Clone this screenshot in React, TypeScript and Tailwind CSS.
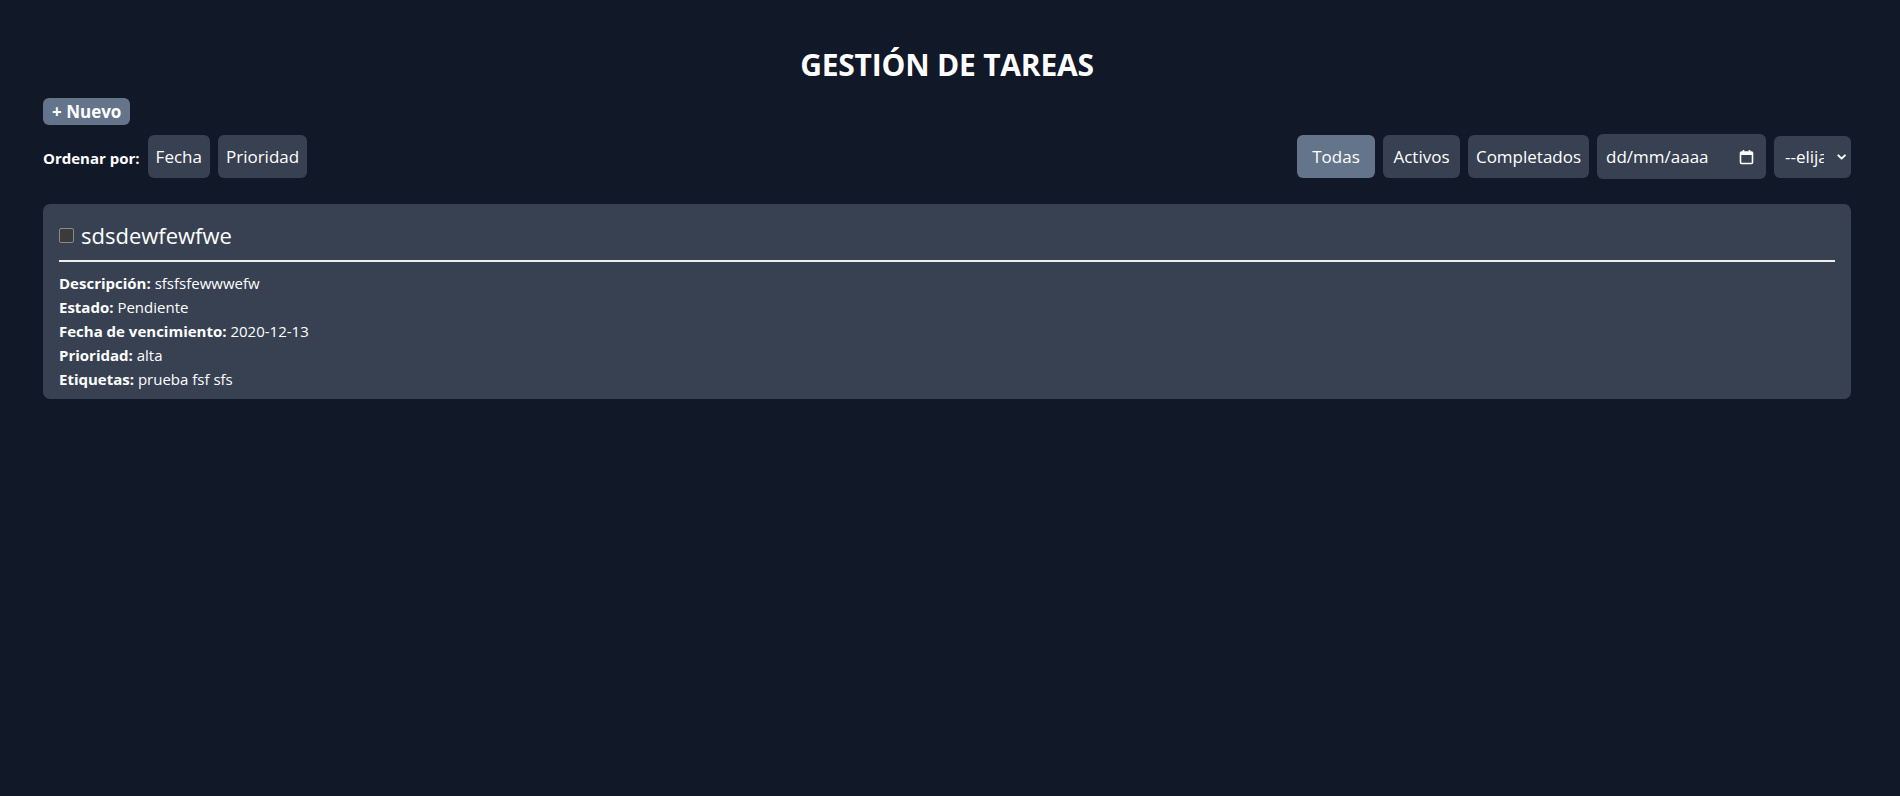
import { ChevronDown } from "lucide-react";

const detalles = [
  { k: "Descripción:", v: "sfsfsfewwwefw" },
  { k: "Estado:", v: "Pendiente" },
  { k: "Fecha de vencimiento:", v: "2020-12-13" },
  { k: "Prioridad:", v: "alta" },
  { k: "Etiquetas:", v: "prueba fsf sfs" },
];

function CalendarIcon() {
  return (
    <svg width="15" height="16" viewBox="0 0 15 16" fill="none">
      <rect x="1.5" y="3" width="12" height="11.5" rx="1" stroke="white" strokeWidth="1.6" />
      <rect x="1.5" y="3" width="12" height="3" fill="white" />
      <path d="M4.5 1v3M10.5 1v3" stroke="white" strokeWidth="1.6" />
    </svg>
  );
}

export default function App() {
  return (
    <div
      className="min-h-screen bg-[#111827] pl-[43px] pr-[49px] text-white"
      style={{ fontFamily: "'Open Sans', 'Noto Sans', sans-serif" }}
    >
      <h1 className="pt-[45px] text-center text-[30px] font-bold leading-[40px] tracking-[-0.2px]">
        GESTIÓN DE TAREAS
      </h1>

      <button className="mt-[13px] h-[27px] rounded-[6px] bg-[#64748b] px-[9px] text-[17px] font-bold leading-[27px] text-white">
        + Nuevo
      </button>

      <div className="mt-[9px] flex h-[45px] items-center justify-between">
        <div className="flex items-center gap-2">
          <span className="pt-[3px] text-[15px] font-bold">Ordenar por:</span>
          <button className="h-[43px] rounded-[6px] bg-[#374151] px-2 text-[17px]">Fecha</button>
          <button className="h-[43px] rounded-[6px] bg-[#374151] px-2 text-[17px]">Prioridad</button>
        </div>

        <div className="flex items-center gap-2">
          <button className="h-[43px] w-[78px] rounded-[6px] bg-[#64748b] text-[17px]">Todas</button>
          <button className="h-[43px] w-[77px] rounded-[6px] bg-[#374151] text-[17px]">Activos</button>
          <button className="h-[43px] w-[121px] rounded-[6px] bg-[#374151] text-[17px]">Completados</button>
          <div className="flex h-[45px] w-[169px] items-center justify-between rounded-[6px] bg-[#374151] pl-[9px] pr-[12px] text-[17px]">
            <span>dd/mm/aaaa</span>
            <CalendarIcon />
          </div>
          <div className="flex h-[42px] w-[77px] items-center rounded-[6px] bg-[#374151] pl-[11px] pr-[3px] text-[17px]">
            <span className="w-[41px] overflow-hidden whitespace-nowrap">--elija una opción--</span>
            <ChevronDown className="ml-[11px] h-[14px] w-[14px]" strokeWidth={3.5} />
          </div>
        </div>
      </div>

      <div className="mt-[25px] rounded-[7px] bg-[#374151] px-4 pb-2 pt-[15px]">
        <div className="flex h-[32px] items-center gap-[7px]">
          <span className="block h-[15px] w-[15px] rounded-[2px] border border-[#8a8a8a] bg-[#3b3b3b]" />
          <span className="text-[22px] leading-[32px]">sdsdewfewfwe</span>
        </div>
        <div className="mb-[9px] mt-[9px] border-t-2 border-[#eeeeee]" />
        <div className="text-[15px] leading-[24px]">
          {detalles.map((d) => (
            <div key={d.k}>
              <span className="font-bold">{d.k}</span> {d.v}
            </div>
          ))}
        </div>
      </div>
    </div>
  );
}
